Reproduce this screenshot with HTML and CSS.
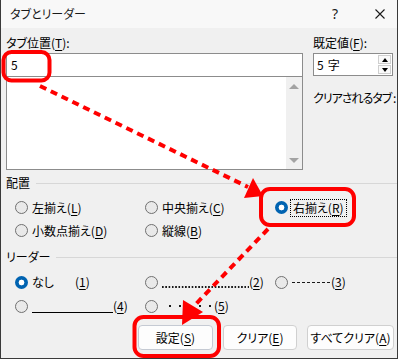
FILE: index.html
```html
<!DOCTYPE html>
<html lang="ja">
<head>
  <meta charset="UTF-8" />
  <meta name="viewport" content="width=device-width, initial-scale=1.0">
  <title>タブとリーダー</title>
  <link rel="stylesheet" href="styles.css">
</head>
<body>

  <div class="dialog">
    <div class="titlebar">
      <span class="title">タブとリーダー</span>
      <span class="help">?</span>
      <svg class="close" width="10" height="10" viewBox="0 0 10 10">
        <path d="M0.5 0.5 L9.5 9.5 M9.5 0.5 L0.5 9.5" stroke="#1a1a1a" stroke-width="1.1" fill="none"/>
      </svg>
    </div>

    <div class="content">
      <div class="top">
        <div class="tabpos">
          <div class="lbl">タブ位置(<u>T</u>):</div>
          <div class="textbox">5</div>
          <div class="listbox">
            <div class="scroll">
              <span class="tri up"></span>
              <span class="tri down"></span>
            </div>
          </div>
        </div>
        <div class="defaults">
          <div class="lbl">既定値(<u>F</u>):</div>
          <div class="spin">
            <span class="spin-val">5<span class="unit">字</span></span>
            <div class="spin-btns">
              <span class="sbtn"><i class="tri-s up"></i></span>
              <span class="sbtn"><i class="tri-s down"></i></span>
            </div>
          </div>
          <div class="cleared">クリアされるタブ :</div>
        </div>
      </div>

      <div class="group-head">配置</div>
      <div class="options align">
        <div class="opt"><span class="radio"></span><span>左揃え(<u>L</u>)</span></div>
        <div class="opt"><span class="radio"></span><span>中央揃え(<u>C</u>)</span></div>
        <div class="opt"><span class="radio on"></span><span class="focus">右揃え(<u>R</u>)</span></div>
        <div class="opt"><span class="radio"></span><span>小数点揃え(<u>D</u>)</span></div>
        <div class="opt"><span class="radio"></span><span>縦線(<u>B</u>)</span></div>
      </div>

      <div class="group-head">リーダー</div>
      <div class="options leader">
        <div class="opt"><span class="radio on"></span><span class="none">なし</span><span>(<u>1</u>)</span></div>
        <div class="opt"><span class="radio"></span><span class="fill dotted"></span><span>(<u>2</u>)</span></div>
        <div class="opt"><span class="radio"></span><span class="fill dashed"></span><span>(<u>3</u>)</span></div>
        <div class="opt"><span class="radio"></span><span class="fill solid"></span><span>(<u>4</u>)</span></div>
        <div class="opt"><span class="radio"></span><span class="fill middots"></span><span>(<u>5</u>)</span></div>
      </div>

      <div class="buttons">
        <button class="btn set">設定(<u>S</u>)</button>
        <button class="btn clear">クリア(<u>E</u>)</button>
        <button class="btn clear-all">すべてクリア(<u>A</u>)</button>
      </div>
    </div>
  </div>

  <!-- red annotation marks -->
  <svg class="marks" width="400" height="359" viewBox="0 0 400 359">
    <g fill="none" stroke="#ff0000" stroke-width="4">
      <rect x="3.5" y="52" width="46" height="28.5" rx="8"/>
      <rect x="261" y="189" width="93" height="36" rx="9"/>
      <rect x="134.5" y="317" width="84.5" height="39" rx="9"/>
    </g>
    <g stroke="#ff0000" stroke-width="4" stroke-dasharray="7 5">
      <line x1="40" y1="86" x2="248" y2="187"/>
      <line x1="268" y1="229" x2="194" y2="306"/>
    </g>
    <polygon fill="#ff0000" points="263,196 244,198 253,178"/>
    <polygon fill="#ff0000" points="182,325 183,300 203,312"/>
  </svg>

</body>
</html>
```

FILE: styles.css
```css
* {
  box-sizing: border-box;
}

body {
  margin: 0;
  position: relative;
  background: #ffffff;
  font-family: "Noto Sans CJK JP", "Noto Sans", sans-serif;
  font-size: 12px;
  line-height: 16px;
  color: #000;
  font-feature-settings: "palt";
}

u {
  text-underline-offset: 2px;
}

.dialog {
  width: 398px;
  height: 359px;
  background: #f0f0f0;
  border: 1px solid #3a3a3a;
  border-top: none;
  overflow: hidden;
}

.titlebar {
  height: 28px;
  background: #f8f8f8;
  display: flex;
  align-items: center;
  padding-left: 9px;
}

.title {
  flex: 1;
  color: #1a1a1a;
}

.help {
  font-family: "Noto Sans", sans-serif;
  font-size: 14px;
  color: #1a1a1a;
  margin-right: 37px;
}

.close {
  margin-right: 12px;
}

.content {
  padding: 7px 0 0 5px;
}

.top {
  display: flex;
  gap: 10px;
}

.tabpos {
  width: 297px;
}

.lbl {
  height: 16px;
}

.textbox {
  margin-top: 2px;
  height: 24px;
  background: #fff;
  border: 1px solid #8c8c8c;
  padding: 3px 0 0 4px;
}

.listbox {
  height: 93px;
  background: #fff;
  border: 1px solid #8c8c8c;
  border-top: none;
  display: flex;
  justify-content: flex-end;
}

.scroll {
  width: 16px;
  background: #f0f0f0;
  display: flex;
  flex-direction: column;
  justify-content: space-between;
  align-items: center;
  padding: 7px 0 6px;
}

.tri {
  width: 0;
  height: 0;
  border-left: 5px solid transparent;
  border-right: 5px solid transparent;
}

.tri.up {
  border-bottom: 5px solid #a3a3a3;
}

.tri.down {
  border-top: 5px solid #a3a3a3;
}

.defaults {
  width: 80px;
}

.spin {
  margin-top: 2px;
  height: 23px;
  background: #fff;
  border: 1px solid #8c8c8c;
  display: flex;
  align-items: center;
  padding-left: 3px;
}

.spin-val {
  flex: 1;
}

.unit {
  margin-left: 4px;
}

.spin-btns {
  display: flex;
  flex-direction: column;
  gap: 1px;
  margin-right: 1px;
}

.sbtn {
  width: 13px;
  height: 9px;
  border: 1px solid #cfcfcf;
  background: #fafafa;
  display: flex;
  align-items: center;
  justify-content: center;
}

.tri-s {
  width: 0;
  height: 0;
  border-left: 3px solid transparent;
  border-right: 3px solid transparent;
}

.tri-s.up {
  border-bottom: 4px solid #000;
}

.tri-s.down {
  border-top: 4px solid #000;
}

.cleared {
  margin-top: 14px;
  white-space: nowrap;
  letter-spacing: -1px;
}

.group-head {
  margin-top: 5px;
  display: flex;
  align-items: center;
}

.group-head::after {
  content: "";
  flex: 1;
  border-top: 1px solid #d7d7d7;
  margin-left: 6px;
}

.options {
  margin-top: 5px;
  padding-left: 9px;
  display: grid;
  grid-template-columns: 130px 130px 130px;
}

.options.align {
  grid-auto-rows: 23px;
}

.options.align + .group-head {
  margin-top: 7px;
}

.options.leader {
  grid-auto-rows: 24px;
}

.opt {
  display: flex;
  align-items: center;
  gap: 4px;
  white-space: nowrap;
}

.radio {
  width: 13px;
  height: 13px;
  border-radius: 50%;
  border: 1px solid #707070;
  background: #e9e9e9;
  flex: none;
}

.radio.on {
  border: none;
  background: radial-gradient(circle, #fff 0 2.6px, #0063b1 3.2px);
}

.focus {
  border: 1px dotted #000;
  padding: 0 2px;
  margin-left: -2px;
}

.none {
  width: 39px;
}

.fill {
  display: inline-block;
  height: 14px;
  margin-right: -4px;
}

.fill.dotted {
  width: 87px;
  background: linear-gradient(to right, #1a1a1a 0 1.3px, transparent 1.3px) left 11px / 3.3px 1.6px repeat-x;
}

.fill.dashed {
  width: 39px;
  background: linear-gradient(to right, #1a1a1a 0 3.5px, transparent 3.5px) left 7px / 5px 1px repeat-x;
}

.fill.solid {
  width: 81px;
  border-bottom: 1px solid #000;
}

.fill.middots {
  width: 52px;
  background: radial-gradient(circle, #1a1a1a 0 1.1px, transparent 1.5px) left 3px top 5px / 10px 4px repeat-x;
}

.buttons {
  margin-top: 7px;
  padding-left: 132px;
  display: flex;
  gap: 10px;
}

.btn {
  height: 25px;
  background: #fdfdfd;
  border: 1px solid #d0d0d0;
  border-radius: 4px;
  font-family: inherit;
  font-size: 12px;
  color: #000;
  padding: 0;
  font-feature-settings: "palt";
}

.btn.set {
  width: 75px;
  border-color: #c5cad3;
}

.btn.clear {
  width: 74px;
}

.btn.clear-all {
  width: 87px;
}

.marks {
  position: absolute;
  top: 0;
  left: 0;
  pointer-events: none;
}
```
